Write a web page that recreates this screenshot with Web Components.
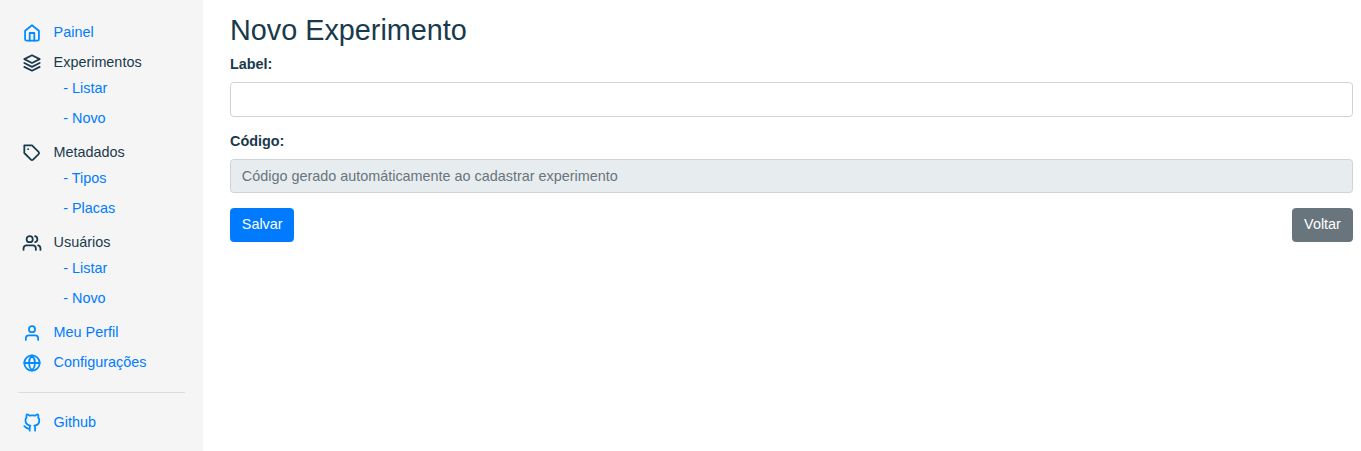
<!DOCTYPE html>
<html lang="pt-BR">
<head>
<meta charset="utf-8">
<title>Novo Experimento</title>
<style>
html{font-size:14.4px}
body{margin:0;background:#fff;color:#193a4c;font:1rem/1.5 "Liberation Sans",Arial,sans-serif}
</style>
</head>
<body>
<app-shell>
  <side-bar slot="side">
    <nav-item icon="home" link>Painel</nav-item>
    <nav-item icon="layers">Experimentos</nav-item>
    <nav-sub>Listar</nav-sub>
    <nav-sub>Novo</nav-sub>
    <nav-item icon="tag">Metadados</nav-item>
    <nav-sub>Tipos</nav-sub>
    <nav-sub>Placas</nav-sub>
    <nav-item icon="users">Usuários</nav-item>
    <nav-sub>Listar</nav-sub>
    <nav-sub>Novo</nav-sub>
    <nav-item icon="user" link>Meu Perfil</nav-item>
    <nav-item icon="globe" link>Configurações</nav-item>
    <nav-rule></nav-rule>
    <nav-item icon="github" link>Github</nav-item>
  </side-bar>
  <page-title>Novo Experimento</page-title>
  <form-field label="Label:"></form-field>
  <form-field label="Código:" disabled placeholder="Código gerado automáticamente ao cadastrar experimento"></form-field>
  <form-actions>
    <app-button>Salvar</app-button>
    <app-button kind="secondary">Voltar</app-button>
  </form-actions>
</app-shell>
<script>
const ICONS = {
  home: '<path d="M3 9l9-7 9 7v11a2 2 0 0 1-2 2H5a2 2 0 0 1-2-2z"/><polyline points="9 22 9 12 15 12 15 22"/>',
  layers: '<polygon points="12 2 2 7 12 12 22 7 12 2"/><polyline points="2 17 12 22 22 17"/><polyline points="2 12 12 17 22 12"/>',
  tag: '<path d="M20.59 13.41l-7.17 7.17a2 2 0 0 1-2.83 0L2 12V2h10l8.59 8.59a2 2 0 0 1 0 2.82z"/><line x1="7" y1="7" x2="7.01" y2="7"/>',
  users: '<path d="M17 21v-2a4 4 0 0 0-4-4H5a4 4 0 0 0-4 4v2"/><circle cx="9" cy="7" r="4"/><path d="M23 21v-2a4 4 0 0 0-3-3.87"/><path d="M16 3.13a4 4 0 0 1 0 7.75"/>',
  user: '<path d="M20 21v-2a4 4 0 0 0-4-4H8a4 4 0 0 0-4 4v2"/><circle cx="12" cy="7" r="4"/>',
  globe: '<circle cx="12" cy="12" r="10"/><line x1="2" y1="12" x2="22" y2="12"/><path d="M12 2a15.3 15.3 0 0 1 4 10 15.3 15.3 0 0 1-4 10 15.3 15.3 0 0 1-4-10 15.3 15.3 0 0 1 4-10z"/>',
  github: '<path d="M9 19c-5 1.5-5-2.5-7-3m14 6v-3.87a3.37 3.37 0 0 0-.94-2.61c3.14-.35 6.44-1.54 6.44-7A5.44 5.44 0 0 0 20 4.77 5.07 5.07 0 0 0 19.91 1S18.73.65 16 2.48a13.38 13.38 0 0 0-7 0C6.27.65 5.09 1 5.09 1A5.07 5.07 0 0 0 5 4.77a5.44 5.44 0 0 0-1.5 3.78c0 5.42 3.3 6.61 6.44 7A3.37 3.37 0 0 0 9 18.13V22"/>'
};

function define(name, render) {
  customElements.define(name, class extends HTMLElement {
    constructor() { super(); this.attachShadow({ mode: 'open' }); }
    connectedCallback() { this.shadowRoot.innerHTML = render(this); }
  });
}

define('app-shell', () => `<style>
  :host{display:grid;grid-template-columns:203px minmax(0,1fr);height:100vh;overflow:hidden}
  main{padding:13px 8px 0 27px}
</style><slot name="side"></slot><main><slot></slot></main>`);

define('side-bar', () => `<style>
  :host{display:flex;flex-direction:column;box-sizing:border-box;background:#f5f5f5;padding:18px 18px 0}
</style><slot></slot>`);

define('nav-item', el => `<style>
  :host{display:flex;align-items:center;height:30px;padding-left:4px;color:#193a4c}
  :host([link]){color:#007bff}
  svg{width:20px;height:20px;margin-right:11.6px;flex:none;fill:none;stroke:currentColor;stroke-width:2.3;stroke-linecap:round;stroke-linejoin:round}
  :host([link]) svg{stroke:#008cff}
</style><svg viewBox="-1 -1 26 26">${ICONS[el.getAttribute('icon')]}</svg><span><slot></slot></span>`);

define('nav-sub', () => `<style>
  :host{display:flex;align-items:center;height:30px;margin-top:-4px;margin-bottom:4px;padding-left:45.2px;color:#007bff}
</style><span>- <slot></slot></span>`);

define('nav-rule', () => `<style>
  :host{display:block;height:1px;margin:14px 0 15px;background:#dcdcdc}
</style>`);

define('page-title', () => `<style>
  :host{display:block}
  h2{margin:0 0 6px;font-size:2rem;line-height:35px;font-weight:400}
</style><h2><slot></slot></h2>`);

define('form-field', el => `<style>
  :host{display:block;margin-bottom:14px}
  :host([disabled]){margin-bottom:15px}
  label{display:block;margin-bottom:7px;font-weight:700;line-height:21px}
  input{display:block;box-sizing:border-box;width:100%;height:35px;padding:0 .75rem;border:1px solid #ccd3d9;border-radius:.25rem;background:#fff;color:#495057;font:inherit}
  input:disabled{height:34px;background:#e7ecef}
  input::placeholder{color:#67757c;opacity:1}
</style><label for="f">${el.getAttribute('label')}</label>
<input id="f" placeholder="${el.getAttribute('placeholder') || ''}" ${el.hasAttribute('disabled') ? 'disabled' : ''}>`);

define('form-actions', () => `<style>
  :host{display:flex;justify-content:space-between}
</style><slot></slot>`);

define('app-button', () => `<style>
  :host{display:block}
  button{display:block;font:inherit;line-height:21px;color:#fff;height:34px;min-width:61px;padding:5px .75rem 6px;border:1px solid #007bff;border-radius:.25rem;background:#007bff}
  :host([kind=secondary]) button{background:#68757d;border-color:#68757d}
</style><button type="button"><slot></slot></button>`);
</script>
</body>
</html>
